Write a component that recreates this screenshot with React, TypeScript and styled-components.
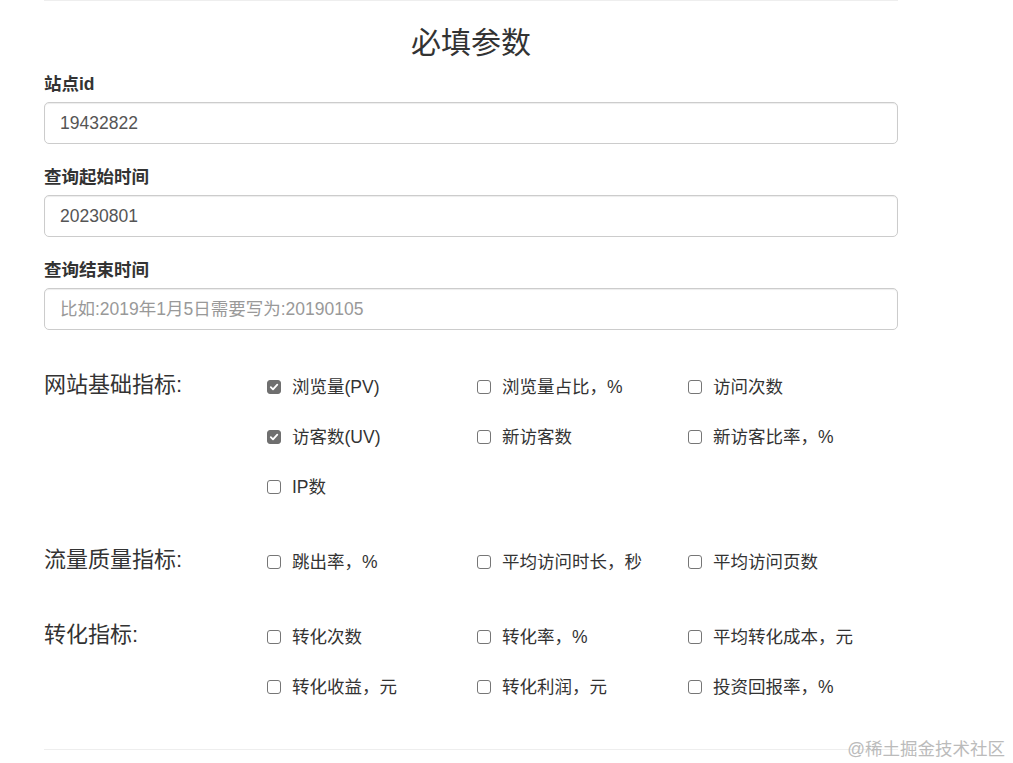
import styled, { createGlobalStyle } from "styled-components";

const GlobalStyle = createGlobalStyle`
    html, body {
        margin: 0;
        padding: 0;
        background: #fff;
    }
    body {
        font-family: "Liberation Sans", Arial, "Noto Sans CJK SC", sans-serif;
        color: #333;
    }
`;

type Option = { label: string; checked?: boolean };
type Group = { title: string; options: Option[] };

const fields = [
    { label: "站点id", value: "19432822", placeholder: "" },
    { label: "查询起始时间", value: "20230801", placeholder: "" },
    { label: "查询结束时间", value: "", placeholder: "比如:2019年1月5日需要写为:20190105" },
];

const groups: Group[] = [
    {
        title: "网站基础指标:",
        options: [
            { label: "浏览量(PV)", checked: true },
            { label: "浏览量占比，%" },
            { label: "访问次数" },
            { label: "访客数(UV)", checked: true },
            { label: "新访客数" },
            { label: "新访客比率，%" },
            { label: "IP数" },
        ],
    },
    {
        title: "流量质量指标:",
        options: [{ label: "跳出率，%" }, { label: "平均访问时长，秒" }, { label: "平均访问页数" }],
    },
    {
        title: "转化指标:",
        options: [
            { label: "转化次数" },
            { label: "转化率，%" },
            { label: "平均转化成本，元" },
            { label: "转化收益，元" },
            { label: "转化利润，元" },
            { label: "投资回报率，%" },
        ],
    },
];

const CheckBox = ({ checked }: { checked?: boolean }) => (
    <Box $checked={checked}>
        {checked && (
            <svg width="10" height="10" viewBox="0 0 10 10">
                <path d="M1.8 5.2 L4 7.4 L8.3 2.6" fill="none" stroke="#fff" strokeWidth="1.8" strokeLinecap="round" strokeLinejoin="round" />
            </svg>
        )}
    </Box>
);

export default function App() {
    return (
        <>
            <GlobalStyle />
            <Page>
                <Container>
                    <Rule />
                    <Title>必填参数</Title>
                    {fields.map((f) => (
                        <FormGroup key={f.label}>
                            <Label>{f.label}</Label>
                            <Input defaultValue={f.value} placeholder={f.placeholder} />
                        </FormGroup>
                    ))}
                    <Groups>
                        {groups.map((g) => (
                            <GroupRow key={g.title}>
                                <GroupTitle>{g.title}</GroupTitle>
                                <Options>
                                    {g.options.map((o) => (
                                        <OptionItem key={o.label}>
                                            <CheckBox checked={o.checked} />
                                            <span>{o.label}</span>
                                        </OptionItem>
                                    ))}
                                </Options>
                            </GroupRow>
                        ))}
                    </Groups>
                    <Rule />
                </Container>
                <Watermark>@稀土掘金技术社区</Watermark>
            </Page>
        </>
    );
}

const Page = styled.div`
    position: relative;
    width: 1013px;
    height: 763px;
    overflow: hidden;
`;

const Container = styled.div`
    width: 854px;
    margin-left: 44px;
    display: flex;
    flex-direction: column;
`;

const Rule = styled.div`
    height: 1px;
    background: #eee;
`;

const Title = styled.h3`
    margin: 25px 0 0 0;
    font-size: 30px;
    font-weight: 400;
    line-height: 33px;
    text-align: center;
    color: #333;
`;

const FormGroup = styled.div`
    display: flex;
    flex-direction: column;
    margin-top: 13px;
    & + & {
        margin-top: 21px;
    }
`;

const Label = styled.label`
    font-size: 17.5px;
    font-weight: 700;
    line-height: 25px;
    margin-bottom: 5px;
    color: #333;
`;

const Input = styled.input`
    box-sizing: border-box;
    height: 42px;
    width: 100%;
    padding: 0 15px;
    font-family: inherit;
    font-size: 17.5px;
    color: #555;
    border: 1px solid #ccc;
    border-radius: 5px;
    box-shadow: inset 0 1px 1px rgba(0, 0, 0, 0.075);
    outline: none;
    &::placeholder {
        color: #999;
    }
`;

const Groups = styled.div`
    display: flex;
    flex-direction: column;
    gap: 25px;
    margin-top: 30px;
    margin-bottom: 39px;
`;

const GroupRow = styled.div`
    display: grid;
    grid-template-columns: 223px 1fr;
`;

const GroupTitle = styled.div`
    font-size: 22px;
    line-height: 50px;
    height: 50px;
    color: #333;
`;

const Options = styled.div`
    display: grid;
    grid-template-columns: 210px 211px 1fr;
    grid-auto-rows: 50px;
`;

const OptionItem = styled.label`
    display: flex;
    align-items: center;
    gap: 11px;
    font-size: 17.5px;
    color: #333;
`;

const Box = styled.span<{ $checked?: boolean }>`
    box-sizing: border-box;
    width: 14px;
    height: 14px;
    margin-top: 3px;
    border-radius: 3px;
    flex-shrink: 0;
    display: flex;
    align-items: center;
    justify-content: center;
    border: 1px solid ${({ $checked }) => ($checked ? "#6f6f6f" : "#767676")};
    background: ${({ $checked }) => ($checked ? "#6f6f6f" : "#fff")};
`;

const Watermark = styled.div`
    position: absolute;
    right: 8px;
    top: 735px;
    font-size: 17.5px;
    color: #bbb;
    font-family: "Liberation Sans", "Noto Sans CJK SC", sans-serif;
`;
